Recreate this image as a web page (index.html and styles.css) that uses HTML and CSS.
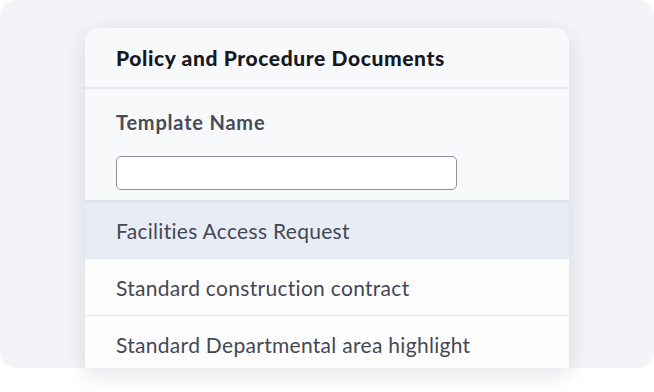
FILE: index.html
```html
<!DOCTYPE html>
<html lang="en">
<head>
    <meta charset="UTF-8">
    <title>Policy and Procedure Documents</title>
    <link rel="stylesheet" href="styles.css">
</head>
<body>
    <div class="stage">
        <div class="card">
            <div class="card-header">Policy and Procedure Documents</div>

            <div class="search">
                <label for="templateName">Template Name</label>
                <input type="text" id="templateName">
            </div>

            <ul class="templates">
                <li class="active">Facilities Access Request</li>
                <li>Standard construction contract</li>
                <li>Standard Departmental area highlight</li>
            </ul>
        </div>
    </div>
</body>
</html>
```

FILE: styles.css
```css
body {
    margin: 0;
    min-height: 392px;
    background-color: #fff;
    font-family: Lato, "Open Sans", sans-serif;
    font-variant-ligatures: none;
}

.stage {
    height: 368px;
    padding: 28px 85px 0 85px;
    box-sizing: border-box;
    background-color: #f3f4f7;
    border-radius: 16px;
}

.card {
    width: 484px;
    height: 340px;
    overflow: hidden;
    background-color: #f8f9fb;
    border-radius: 14px 14px 0 0;
    box-shadow: 0 6px 22px rgba(30, 40, 70, 0.13);
}

.card-header {
    height: 59px;
    padding-left: 31px;
    display: flex;
    align-items: center;
    font-size: 21px;
    font-weight: 900;
    letter-spacing: 0.6px;
    color: #161921;
    border-bottom: 2px solid #e6e8ee;
}

.search {
    height: 111px;
    padding: 0 31px;
    box-sizing: border-box;
    display: flex;
    flex-direction: column;
    box-shadow: 0 2px 2px rgba(30, 40, 70, 0.05);
    position: relative;
}

.search label {
    margin-top: 21px;
    font-size: 20px;
    font-weight: 700;
    letter-spacing: 0.8px;
    color: #474b57;
}

.search input {
    margin-top: 22px;
    width: 341px;
    height: 34px;
    box-sizing: border-box;
    border: 1.5px solid #8f929c;
    border-radius: 5px;
    background-color: #fff;
}

.templates {
    list-style: none;
    margin: 0;
    padding: 0;
    background-color: #fdfdfe;
}

.templates li {
    height: 56px;
    padding-left: 31px;
    display: flex;
    align-items: center;
    font-size: 21px;
    letter-spacing: 0.3px;
    color: #444855;
    border-bottom: 1px solid #e4e6ec;
}

.templates li.active {
    height: 59px;
    padding-top: 3px;
    box-sizing: border-box;
    background-color: #e8ecf5;
}
```
